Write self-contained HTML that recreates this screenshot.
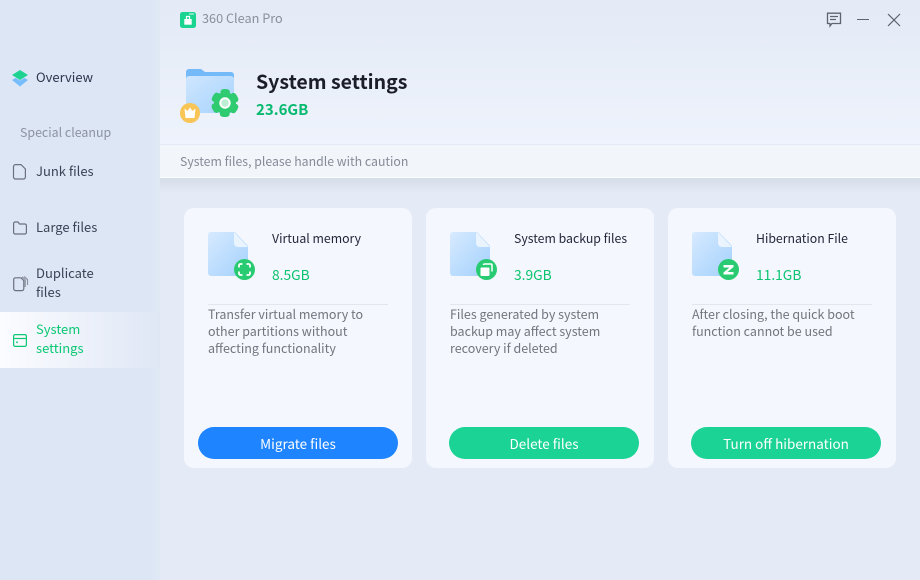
<!DOCTYPE html>
<html><head><meta charset="utf-8"><style>
*{margin:0;padding:0;box-sizing:border-box}
html,body{width:920px;height:580px;overflow:hidden;background:#e5ebf6}
body{position:relative;font-family:"Noto Sans CJK SC","Liberation Sans",sans-serif;font-size:13px;color:#3c4257}
.t{position:absolute;white-space:nowrap;line-height:19px}
.a{position:absolute}
.card{position:absolute;top:208px;width:228px;height:260px;background:#f4f7fd;border-radius:10px}
.btn{position:absolute;top:427px;height:32px;border-radius:16px;color:#fff;text-align:center;line-height:32px;font-size:13.500px}
.line{position:absolute;top:304px;width:180px;height:1px;background:#e3e6ec}
.desc{color:#70757f;font-size:12.500px;line-height:17px}
.name{color:#22273a;font-size:12.300px}
.gb{color:#0cc36f;font-size:13.800px}
svg{position:absolute;overflow:visible}
</style></head><body>
<div class="a" style="left:160px;top:0;width:760px;height:178px;background:linear-gradient(180deg,#e4eaf6,#f0f5fd)"></div>
<div class="a" style="left:160px;top:144px;width:760px;height:34px;background:#f2f6fb;border-top:1px solid #e3eaf5;border-bottom:1px solid #fbfcfe"></div>
<div class="a" style="left:160px;top:178px;width:760px;height:16px;background:linear-gradient(180deg,#d5dde9,#e5ebf6)"></div>
<div class="a" style="left:0;top:0;width:160px;height:580px;background:linear-gradient(90deg,#dde6f5 0,#dde6f5 150px,#e0e8f5 160px)"></div>
<div class="a" style="left:0;top:312px;width:160px;height:56px;background:linear-gradient(90deg,#fbfcff,#dfe7f5)"></div>

<svg style="left:12px;top:70px" width="18" height="18"><path d="M0 10 3.500 8 8 10.500 12.500 8 16 10 8 16.500Z" fill="#76bdfd"/><path d="M8 0 16 5 8 10 0 5Z" fill="#1ed392"/></svg>
<div class="t" style="left:36px;top:67px;color:#2f3650">Overview</div>
<div class="t" style="left:20px;top:123px;color:#8d929f;font-size:12.400px">Special cleanup</div>

<svg style="left:13px;top:164px" width="14" height="16" fill="none" stroke="#6b7180" stroke-width="1.200"><path d="M2.500.6H8L12.400 5V13a2 2 0 0 1-2 2H2.500a2 2 0 0 1-2-2V2.600a2 2 0 0 1 2-2Z"/></svg>
<div class="t" style="left:36px;top:161px">Junk files</div>
<svg style="left:13px;top:221px" width="14" height="14" fill="none" stroke="#6b7180" stroke-width="1.200"><path d="M.6 2.500a1.500 1.500 0 0 1 1.500-1.500H5l1.500 2h5.400a1.500 1.500 0 0 1 1.500 1.500V11.500a1.500 1.500 0 0 1-1.500 1.500H2.100a1.500 1.500 0 0 1-1.500-1.500Z"/></svg>
<div class="t" style="left:36px;top:217px">Large files</div>
<svg style="left:13px;top:276px" width="16" height="16" fill="none" stroke="#6b7180" stroke-width="1.200"><path d="M2.500 1.800H8L10.800 4.600V12.800a1.800 1.800 0 0 1-1.800 1.800H2.500a1.800 1.800 0 0 1-1.800-1.800V3.600a1.800 1.800 0 0 1 1.800-1.800Z"/><path d="M9 .8 12.200 3.500V11M11 .5 14.500 3.500V9" stroke="#8f94a0"/></svg>
<div class="t" style="left:36px;top:263px">Duplicate</div>
<div class="t" style="left:36px;top:282px">files</div>
<svg style="left:13px;top:334px" width="14" height="13" fill="none" stroke="#0cc874" stroke-width="1.200"><rect x=".6" y=".6" width="12.800" height="11.800" rx="1.500"/><path d="M.6 4.500H13.400"/><rect x="3.200" y="7.500" width="1.600" height="1.600" fill="#0cc874" stroke="none"/></svg>
<div class="t" style="left:36px;top:319px;color:#0cc874">System</div>
<div class="t" style="left:36px;top:338px;color:#0cc874">settings</div>

<svg style="left:180px;top:12px" width="16" height="16"><rect width="16" height="16" rx="2.500" fill="#1ad48f"/><path d="M9 1H14V3H9Z" fill="#7be6c0"/><path d="M4.300 7H11.700V12.700H4.300Z" fill="#fff"/><path d="M6.500 7V4.500H9.500V7" fill="none" stroke="#fff" stroke-width="1.200"/></svg>
<div class="t" style="left:202px;top:8px;color:#8a8f9c;font-size:12.700px">360 Clean Pro</div>

<svg style="left:826px;top:12px" width="16" height="16" fill="none" stroke="#5f6570" stroke-width="1.300"><path d="M1.500 1.200H14.500V11.500H6L4 14V11.500H1.500Z"/><path d="M4 4.500H12M4 7.500H10" stroke-width="1.200"/></svg>
<div class="a" style="left:857px;top:19px;width:12px;height:1px;background:#5f6570"></div>
<svg style="left:888px;top:14px" width="12" height="12" stroke="#5f6570" stroke-width="1.200"><path d="M0 0 12 12M12 0 0 12"/></svg>

<svg style="left:180px;top:68px" width="66" height="56">
<defs><linearGradient id="f" x1="0" y1="0" x2="1" y2="1"><stop offset="0" stop-color="#cfe6ff"/><stop offset="1" stop-color="#a6d3fc"/></linearGradient>
<linearGradient id="p" x1="0" y1="0" x2="1" y2="1"><stop offset="0" stop-color="#d7eaff"/><stop offset="1" stop-color="#a3d1fc"/></linearGradient></defs>
<path d="M6 4a3 3 0 0 1 3-3H21L25 4H51a3 3 0 0 1 3 3V12H6Z" fill="#74baf8"/>
<path d="M6 11a3 3 0 0 1 3-3H51a3 3 0 0 1 3 3V42a3 3 0 0 1-3 3H9a3 3 0 0 1-3-3Z" fill="url(#f)"/>
<circle cx="45" cy="35" r="11" fill="#2ecb70"/>
<circle cx="45" cy="35" r="11" fill="none" stroke="#2ecb70" stroke-width="6" stroke-linecap="round" stroke-dasharray="4 7.520" stroke-dashoffset="2" transform="rotate(-90 45 35)"/>
<circle cx="45" cy="35" r="4.700" fill="#bdeed3" stroke="#fff" stroke-width="2"/>
<circle cx="10" cy="45" r="10" fill="#f8c556"/>
<path d="M4.500 40.500 7.500 43 10 39.500 12.500 43 15.500 40.500 14.500 50H5.500Z" fill="#fff"/>
</svg>
<div class="t" style="left:256px;top:68px;font-size:19.500px;font-weight:700;color:#1b1e28;line-height:26px">System settings</div>
<div class="t" style="left:256px;top:99px;font-size:15px;font-weight:700;color:#08b96f;line-height:21px">23.6GB</div>
<div class="t" style="left:180px;top:152px;color:#858a97;font-size:12.300px">System files, please handle with caution</div>

<div class="card" style="left:184px"></div><div class="card" style="left:426px"></div><div class="card" style="left:668px"></div>

<svg style="left:208px;top:232px" width="50" height="50"><path d="M3 0H27L40 14V41a3 3 0 0 1-3 3H3a3 3 0 0 1-3-3V3a3 3 0 0 1 3-3Z" fill="url(#p)"/><path d="M26 0 40 15H30a4 4 0 0 1-4-4Z" fill="#eaf4ff"/><circle cx="36.500" cy="37.500" r="10.500" fill="#29cb72"/><path d="M31 35.500V33.500a1.500 1.500 0 0 1 1.500-1.500H34.500M38.500 32H40.500a1.500 1.500 0 0 1 1.500 1.500V35.500M42 39.500V41.500a1.500 1.500 0 0 1-1.500 1.500H38.500M34.500 43H32.500a1.500 1.500 0 0 1-1.500-1.500V39.500" fill="none" stroke="#fff" stroke-width="1.800"/></svg>
<div class="t name" style="left:272px;top:229px">Virtual memory</div>
<div class="t gb" style="left:272px;top:265px">8.5GB</div>
<div class="line" style="left:208px"></div>
<div class="t desc" style="left:208px;top:305px">Transfer virtual memory to<br>other partitions without<br>affecting functionality</div>
<div class="btn" style="left:198px;width:200px;background:#1e84ff">Migrate files</div>

<svg style="left:450px;top:232px" width="50" height="50"><path d="M3 0H27L40 14V41a3 3 0 0 1-3 3H3a3 3 0 0 1-3-3V3a3 3 0 0 1 3-3Z" fill="url(#p)"/><path d="M26 0 40 15H30a4 4 0 0 1-4-4Z" fill="#eaf4ff"/><circle cx="36.500" cy="37.500" r="10.500" fill="#29cb72"/><rect x="30.500" y="35.500" width="9" height="8.500" rx="1" fill="#fff"/><path d="M33.500 33a1 1 0 0 1 1-1H41a1 1 0 0 1 1 1V39.500" fill="none" stroke="#fff" stroke-width="1.500"/></svg>
<div class="t name" style="left:514px;top:229px">System backup files</div>
<div class="t gb" style="left:514px;top:265px">3.9GB</div>
<div class="line" style="left:450px"></div>
<div class="t desc" style="left:450px;top:305px">Files generated by system<br>backup may affect system<br>recovery if deleted</div>
<div class="btn" style="left:449px;width:190px;background:#1ad395">Delete files</div>

<svg style="left:692px;top:232px" width="50" height="50"><path d="M3 0H27L40 14V41a3 3 0 0 1-3 3H3a3 3 0 0 1-3-3V3a3 3 0 0 1 3-3Z" fill="url(#p)"/><path d="M26 0 40 15H30a4 4 0 0 1-4-4Z" fill="#eaf4ff"/><circle cx="36.500" cy="37.500" r="10.500" fill="#29cb72"/><path d="M31.500 33H41.500V35L35.500 40H41.500V42.500H31.500V40.500L37.500 35.500H31.500Z" fill="#fff"/></svg>
<div class="t name" style="left:756px;top:229px">Hibernation File</div>
<div class="t gb" style="left:756px;top:265px">11.1GB</div>
<div class="line" style="left:692px"></div>
<div class="t desc" style="left:692px;top:305px">After closing, the quick boot<br>function cannot be used</div>
<div class="btn" style="left:691px;width:190px;background:#1ad395">Turn off hibernation</div>
</body></html>
